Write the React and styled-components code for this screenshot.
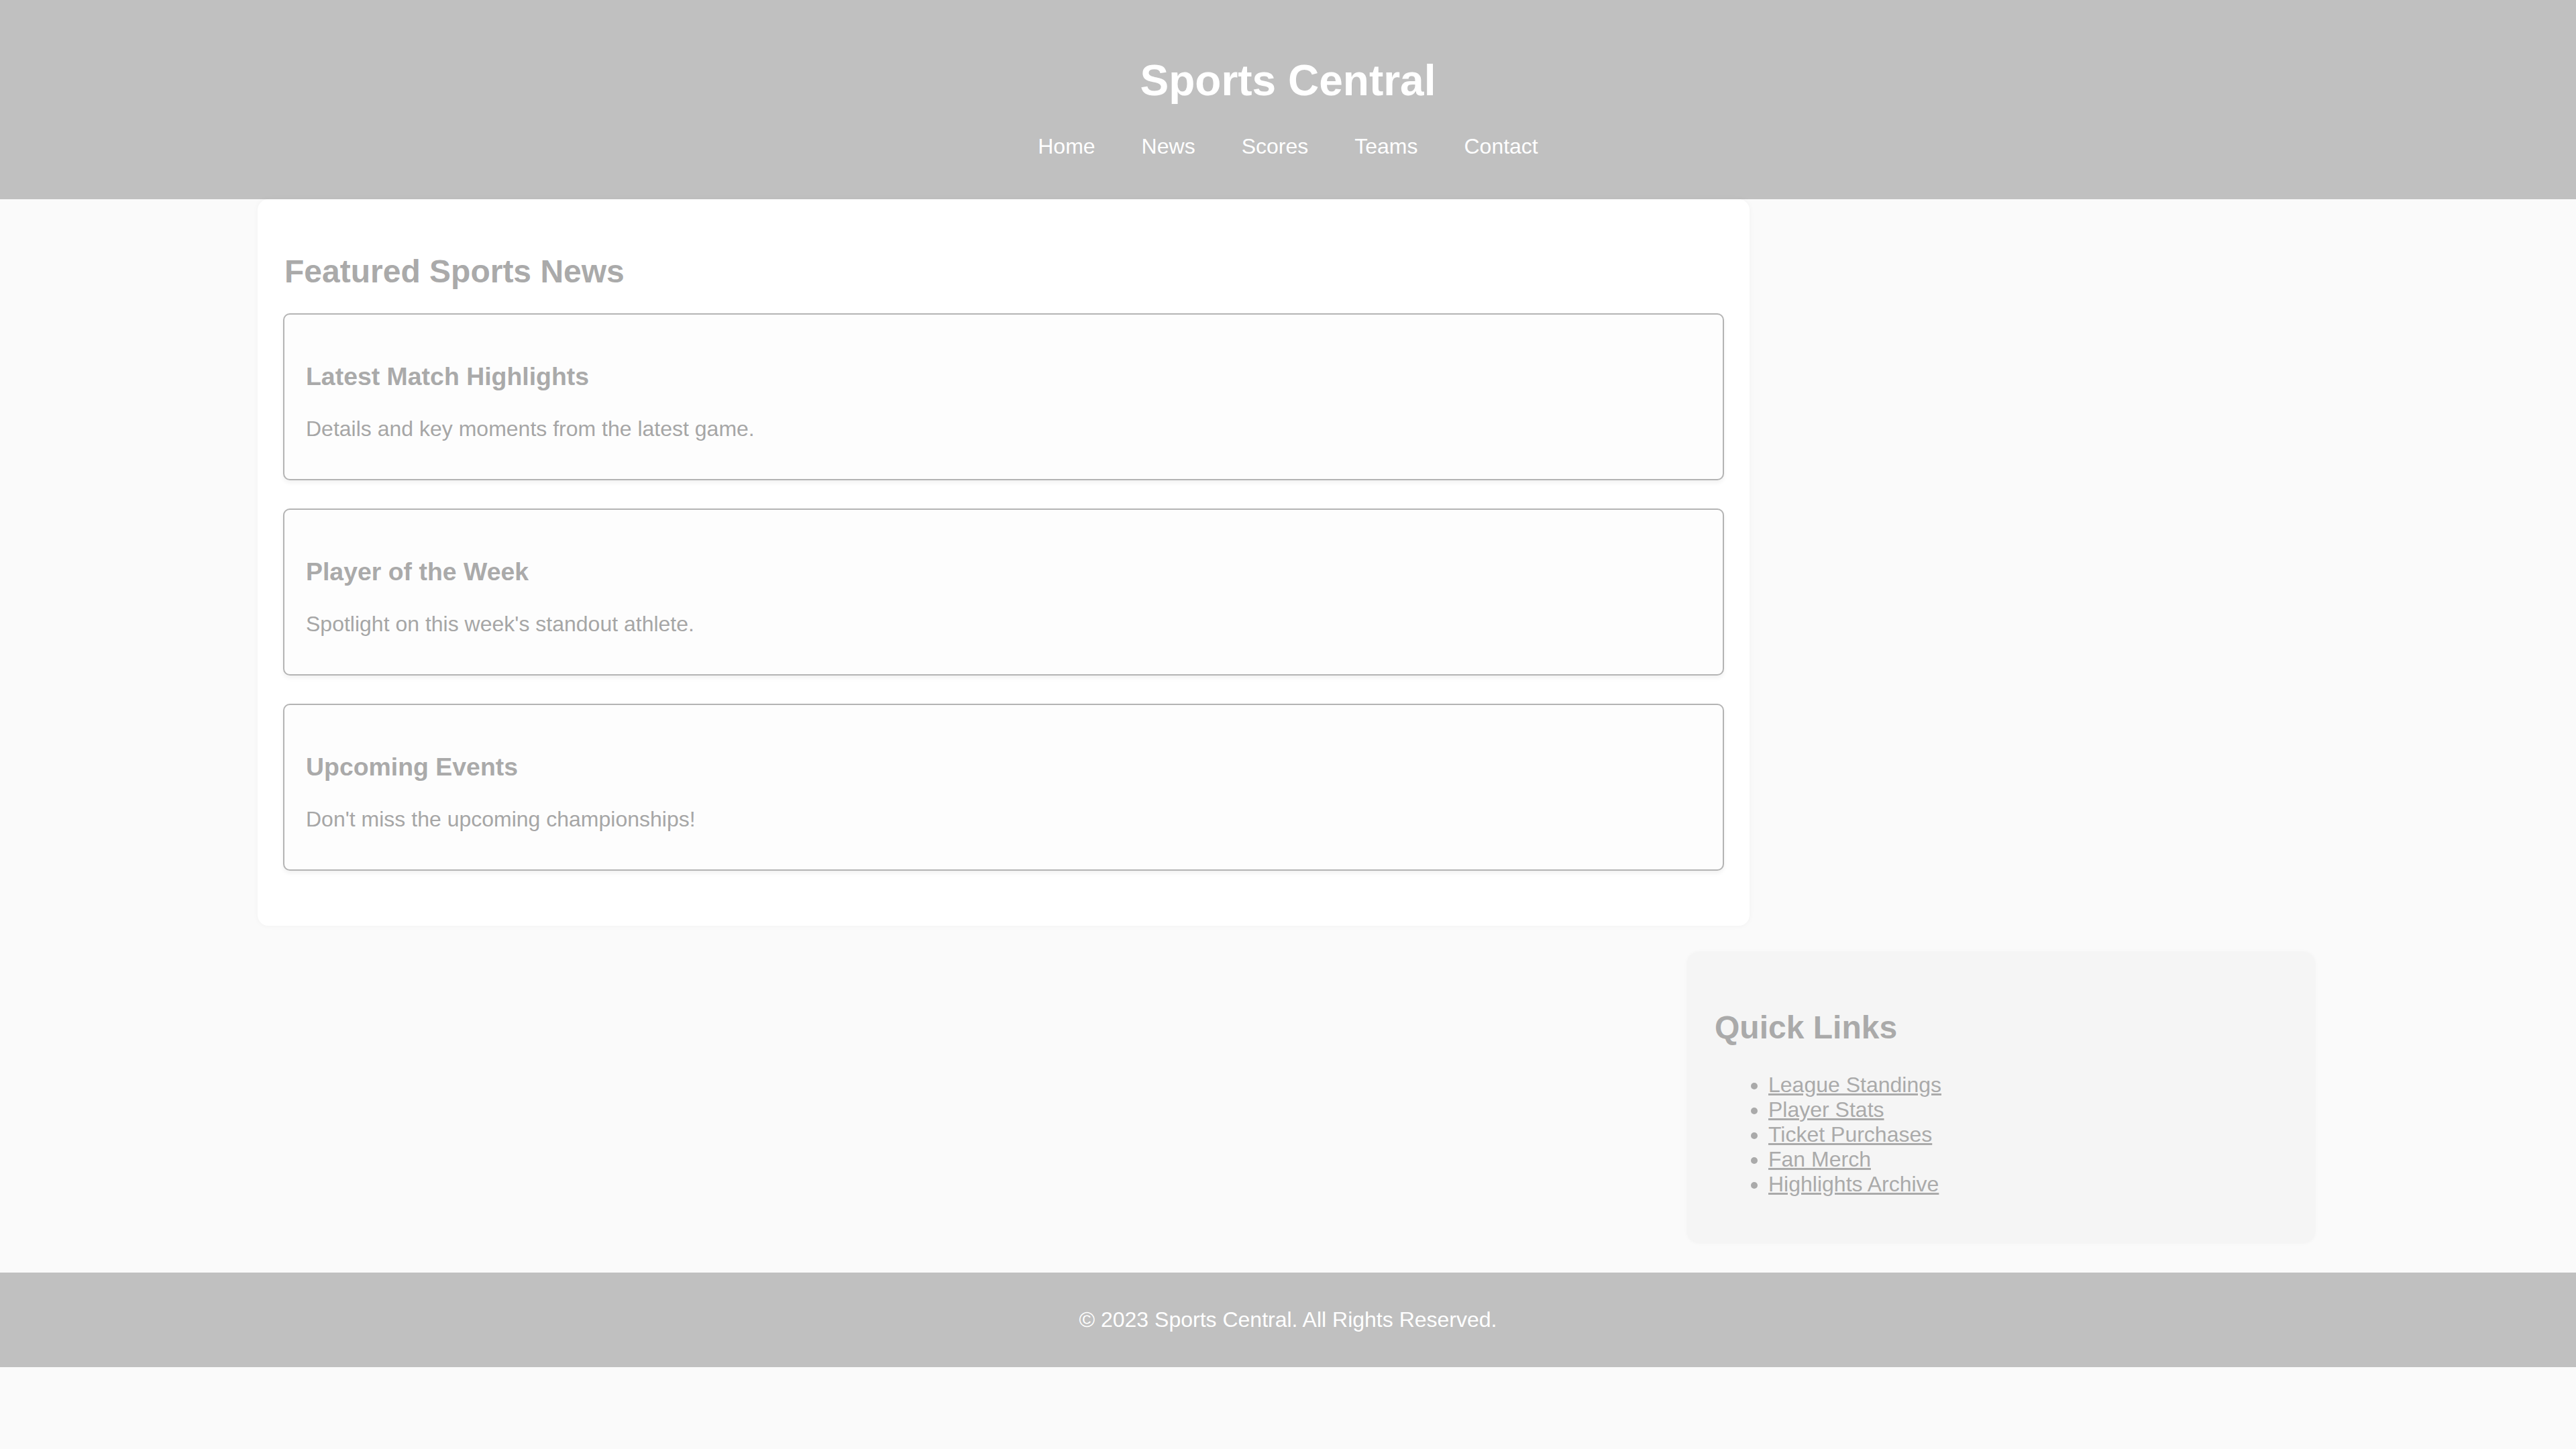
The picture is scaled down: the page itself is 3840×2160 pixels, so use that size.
import styled, { createGlobalStyle } from "styled-components";

const GlobalStyle = createGlobalStyle`
  html, body {
    margin: 0;
    padding: 0;
    background: #fafafa;
    font-family: "Liberation Sans", Arial, sans-serif;
  }
  * {
    box-sizing: border-box;
  }
`;

const Header = styled.header`
  background: #c0c0c0;
  color: #ffffff;
  text-align: center;
  padding: 40px 0 60px;
`;

const Title = styled.h1`
  font-size: 64px;
  font-weight: bold;
  margin: 43px 0;
`;

const Nav = styled.nav`
  ul {
    list-style: none;
    margin: 0;
    padding: 0;
    display: flex;
    justify-content: center;
    gap: 69px;
  }
`;

const NavLink = styled.a`
  color: #ffffff;
  text-decoration: none;
  font-size: 32px;
`;

const Container = styled.div`
  width: 80%;
  margin: 0 auto;
  display: flex;
  flex-direction: column;
`;

const MainPanel = styled.main`
  width: 2224px;
  background: #ffffff;
  padding: 40px;
  border-radius: 16px;
  box-shadow: 0 0 8px rgba(0, 0, 0, 0.04);
`;

const SectionTitle = styled.h2`
  font-size: 48px;
  font-weight: bold;
  color: #aaaaaa;
  margin: 40px 0 ${(p) => (p.$tight ? "35px" : "40px")};
`;

const Card = styled.article`
  background: #fdfdfd;
  border: 2px solid #b4b4b4;
  border-radius: 10px;
  padding: 34px 32px 24px;
  margin: 0 -2px 42px;
  box-shadow: 0 4px 6px rgba(0, 0, 0, 0.05);
`;

const CardTitle = styled.h3`
  font-size: 37.44px;
  font-weight: bold;
  color: #aaaaaa;
  margin: 37.44px 0;
`;

const CardText = styled.p`
  font-size: 32px;
  color: #a6a6a6;
  margin: 32px 0;
`;

const Aside = styled.aside`
  align-self: flex-end;
  width: 934px;
  margin-top: 40px;
  margin-right: 6px;
  background: #f5f5f5;
  padding: 44px 40px 36px;
  border-radius: 16px;
  box-shadow: 0 0 6px rgba(0, 0, 0, 0.05);
`;

const LinkList = styled.ul`
  margin: 32px 0;
  padding-left: 80px;
  font-size: 32px;
  color: #aaaaaa;
`;

const QuickLink = styled.a`
  color: #aaaaaa;
  text-decoration: underline;
`;

const Footer = styled.footer`
  margin-top: 45px;
  background: #c0c0c0;
  color: #ffffff;
  text-align: center;
  padding: 20px;

  p {
    margin: 32px 0;
    font-size: 32px;
  }
`;

const navItems = ["Home", "News", "Scores", "Teams", "Contact"];

const stories = [
  { title: "Latest Match Highlights", text: "Details and key moments from the latest game." },
  { title: "Player of the Week", text: "Spotlight on this week's standout athlete." },
  { title: "Upcoming Events", text: "Don't miss the upcoming championships!" },
];

const links = ["League Standings", "Player Stats", "Ticket Purchases", "Fan Merch", "Highlights Archive"];

const App = () => {
  return (
    <>
      <GlobalStyle />
      <Header>
        <Title>Sports Central</Title>
        <Nav>
          <ul>
            {navItems.map((item) => (
              <li key={item}>
                <NavLink href="#">{item}</NavLink>
              </li>
            ))}
          </ul>
        </Nav>
      </Header>
      <Container>
        <MainPanel>
          <SectionTitle $tight>Featured Sports News</SectionTitle>
          {stories.map((s) => (
            <Card key={s.title}>
              <CardTitle>{s.title}</CardTitle>
              <CardText>{s.text}</CardText>
            </Card>
          ))}
        </MainPanel>
        <Aside>
          <SectionTitle>Quick Links</SectionTitle>
          <LinkList>
            {links.map((l) => (
              <li key={l}>
                <QuickLink href="#">{l}</QuickLink>
              </li>
            ))}
          </LinkList>
        </Aside>
      </Container>
      <Footer>
        <p>© 2023 Sports Central. All Rights Reserved.</p>
      </Footer>
    </>
  );
};

export default App;
